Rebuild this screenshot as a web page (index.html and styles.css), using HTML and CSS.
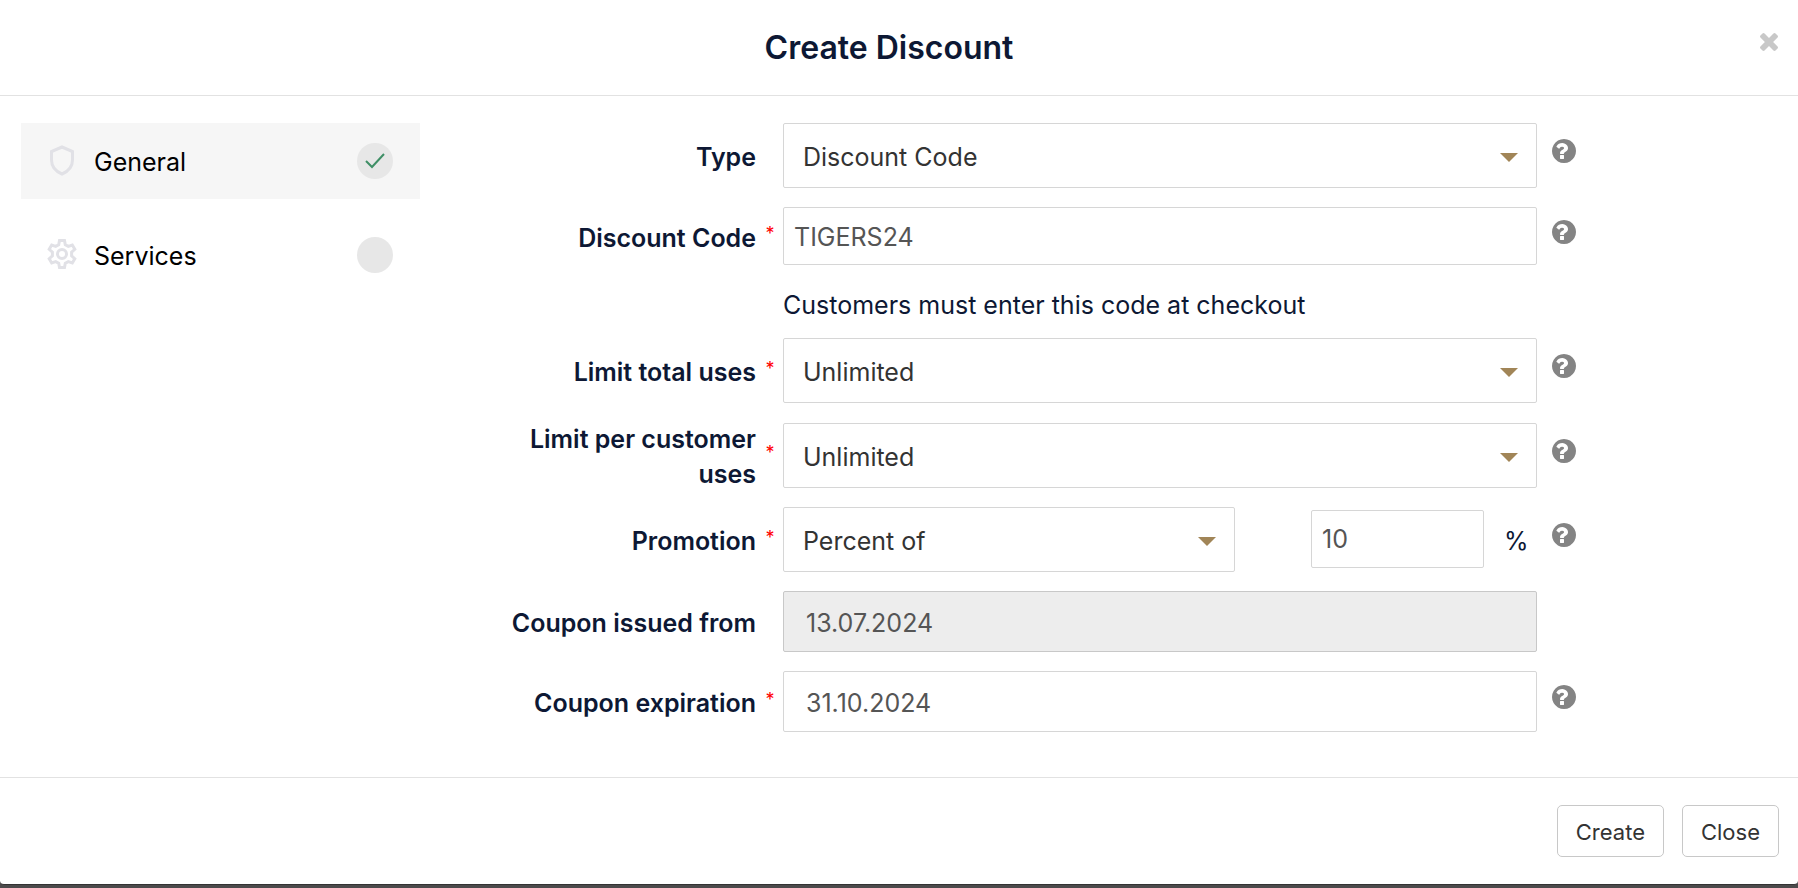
FILE: index.html
```html
<!DOCTYPE html>
<html lang="en">
<head>
<meta charset="utf-8">
<title>Create Discount</title>
<link rel="stylesheet" href="styles.css">
</head>
<body>
<svg class="sprite" aria-hidden="true">
  <symbol id="help" viewBox="128 128 1536 1536"><path d="M896 1376v-192q0-14-9-23t-23-9h-192q-14 0-23 9t-9 23v192q0 14 9 23t23 9h192q14 0 23-9t9-23zm256-672q0-88-55.500-163t-138.500-116-170-41q-243 0-371 213-15 24 8 42l132 100q7 6 19 6 16 0 25-12 53-68 86-92 34-24 86-24 48 0 85.500 26t37.500 59q0 38-20 61t-68 45q-63 28-115.500 86.500t-52.500 125.500v36q0 14 9 23t23 9h192q14 0 23-9t9-23q0-19 21.500-49.500t54.500-49.500q32-18 49-28.500t46-35 44.500-48 28-60.500 12.500-81zm512 192q0 209-103 385.500t-279.500 279.500-385.500 103-385.500-103-279.500-279.500-103-385.500 103-385.500 279.500-279.500 385.500-103 385.500 103 279.500 279.500 103 385.500z"/></symbol>
  <symbol id="caret" viewBox="0 0 18 9"><path d="M0 0h18l-9 9z"/></symbol>
</svg>
<div class="modal" role="dialog" aria-labelledby="title">
  <header class="modal-header">
    <h1 class="title" id="title">Create Discount</h1>
    <button class="dismiss" type="button" aria-label="Dismiss">
      <svg class="dismiss-icon" viewBox="302 366 1188 1188"><path d="M1490 1322q0 40-28 68l-136 136q-28 28-68 28t-68-28l-294-294-294 294q-28 28-68 28t-68-28l-136-136q-28-28-28-68t28-68l294-294-294-294q-28-28-28-68t28-68l136-136q28-28 68-28t68 28l294 294 294-294q28-28 68-28t68 28l136 136q28 28 28 68t-28 68l-294 294 294 294q28 28 28 68z"/></svg>
    </button>
  </header>
  <div class="modal-body">
    <nav class="steps">
      <a class="step active" href="#general">
        <svg class="step-icon" viewBox="0 0 30 30"><path d="M15 2L25.500 6.500V15c0 6.500-4.500 11.500-10.500 14C9 26.500 4.500 21.500 4.500 15V6.500z"/></svg>
        <span class="step-name">General</span>
        <span class="badge"><svg class="check" viewBox="0 0 20 16"><path d="M1 8l6 6L19 1"/></svg></span>
      </a>
      <a class="step" href="#services">
        <svg class="step-icon" viewBox="0 0 30 30"><circle cx="15" cy="15" r="4.500"/><path d="M12.500 1.500h5l.8 4.200 3 1.700 4-1.400 2.500 4.300-3.200 2.900v3.600l3.200 2.900-2.500 4.300-4-1.400-3 1.700-.8 4.200h-5l-.8-4.200-3-1.700-4 1.400-2.500-4.300 3.200-2.900v-3.600l-3.200-2.900 2.500-4.300 4 1.400 3-1.700z"/></svg>
        <span class="step-name">Services</span>
        <span class="badge"></span>
      </a>
    </nav>
    <form class="form" id="discount">
      <div class="row">
        <label class="label" for="type">Type</label>
        <span class="req"></span>
        <div class="select"><select class="control tall" id="type"><option>Discount Code</option></select><svg class="caret"><use href="#caret"/></svg></div>
        <svg class="help"><use href="#help"/></svg>
      </div>
      <div class="row">
        <label class="label" for="code">Discount Code</label>
        <span class="req">*</span>
        <input class="control" id="code" type="text" value="TIGERS24">
        <svg class="help"><use href="#help"/></svg>
        <p class="hint">Customers must enter this code at checkout</p>
      </div>
      <div class="row">
        <label class="label" for="total">Limit total uses</label>
        <span class="req">*</span>
        <div class="select"><select class="control tall" id="total"><option>Unlimited</option></select><svg class="caret"><use href="#caret"/></svg></div>
        <svg class="help"><use href="#help"/></svg>
      </div>
      <div class="row">
        <label class="label" for="each">Limit per customer uses</label>
        <span class="req">*</span>
        <div class="select"><select class="control tall" id="each"><option>Unlimited</option></select><svg class="caret"><use href="#caret"/></svg></div>
        <svg class="help"><use href="#help"/></svg>
      </div>
      <div class="row">
        <label class="label" for="promo">Promotion</label>
        <span class="req">*</span>
        <div class="promo">
          <div class="select"><select class="control tall" id="promo"><option>Percent of</option></select><svg class="caret"><use href="#caret"/></svg></div>
          <input class="control amount" id="amount" type="text" value="10" aria-label="Amount">
          <label class="unit" for="amount">%</label>
        </div>
        <svg class="help"><use href="#help"/></svg>
      </div>
      <div class="row">
        <label class="label" for="from">Coupon issued from</label>
        <span class="req"></span>
        <input class="control date" id="from" type="text" value="13.07.2024" disabled>
      </div>
      <div class="row">
        <label class="label" for="until">Coupon expiration</label>
        <span class="req">*</span>
        <input class="control date" id="until" type="text" value="31.10.2024">
        <svg class="help"><use href="#help"/></svg>
      </div>
    </form>
  </div>
  <footer class="modal-footer">
    <button class="btn" type="submit" form="discount">Create</button>
    <button class="btn" type="button">Close</button>
  </footer>
</div>
</body>
</html>
```
FILE: styles.css
```css
* {
  box-sizing: border-box;
}

body {
  margin: 0;
  min-height: 100vh;
  background: #4c4a4b;
  font-family: Inter, "Liberation Sans", sans-serif;
  font-size: 25px;
  line-height: 35px;
  color: #0d1834;
}

.sprite {
  display: none;
}

.modal {
  background: #fff;
  border-bottom: 1px solid #333;
  border-radius: 0 0 4px 4px;
}

.modal-header {
  position: relative;
  padding: 28px 20px 27px;
  border-bottom: 1px solid #e2e2e2;
}

.title {
  margin: 0;
  padding-right: 20px;
  font-size: 32px;
  line-height: 40px;
  font-weight: 600;
  text-align: center;
}

.dismiss {
  position: absolute;
  top: 33px;
  right: 20px;
  padding: 0;
  border: 0;
  background: none;
}

.dismiss-icon {
  display: block;
  width: 18px;
  height: 18px;
  fill: #c8c8c8;
}

.modal-body {
  display: grid;
  grid-template-columns: 399fr 1357fr;
  padding: 27px 21px 45px;
}

.steps {
  display: flex;
  flex-direction: column;
  gap: 18px;
}

.step {
  display: flex;
  align-items: center;
  gap: 17px;
  height: 76px;
  padding: 0 27px 0 26px;
  color: #000;
  text-decoration: none;
}

.active {
  background: #f6f6f6;
}

.step-icon {
  width: 30px;
  height: 32px;
  margin-bottom: 2px;
  fill: none;
  stroke: #e1e1e6;
  stroke-width: 3;
}

.step-name {
  flex: 1;
  padding-top: 3px;
}

.badge {
  display: grid;
  place-items: center;
  width: 36px;
  height: 36px;
  border-radius: 50%;
  background: #e7e7e7;
}

.check {
  width: 20px;
  height: 16px;
  fill: none;
  stroke: #3f8f66;
  stroke-width: 2;
}

.form {
  display: flex;
  flex-direction: column;
  gap: 19px;
}

.row {
  display: grid;
  grid-template-columns: 337fr 26px 754fr 39px 201fr;
  align-items: center;
}

.label {
  margin: -4px 0;
  padding: 4px 1px 0 72px;
  font-weight: 600;
  text-align: right;
}

.req {
  padding-bottom: 4px;
  font-size: 18px;
  line-height: 20px;
  text-align: center;
  color: #f00;
}

.control {
  width: 100%;
  height: 58px;
  padding: 2px 10px 0;
  border: 1px solid #d6d6d6;
  border-radius: 2px;
  background: #fff;
  font: inherit;
  color: #555;
}

.tall {
  display: block;
  height: 65px;
  padding: 4px 19px 0;
  appearance: none;
  color: #333;
}

.date {
  height: 61px;
  padding: 3px 22px 0;
}

.control:disabled {
  border-color: #c8c8c8;
  background: #ededed;
}

.select {
  position: relative;
}

.caret {
  position: absolute;
  top: 30px;
  right: 19px;
  width: 18px;
  height: 9px;
  fill: #a18557;
  pointer-events: none;
}

.promo {
  display: grid;
  grid-template-columns: 452fr 76fr 173fr 53fr;
  align-items: center;
}

.amount {
  grid-column: 3;
  margin-bottom: 2px;
  padding-top: 0;
}

.unit {
  padding: 3px 0 0 20px;
}

.help {
  width: 24px;
  height: 24px;
  margin: 0 0 9px 15px;
  fill: #848484;
}

.hint {
  grid-column: 3;
  margin: 23px 0 -4px;
}

.modal-footer {
  display: flex;
  justify-content: flex-end;
  gap: 18px;
  padding: 27px 19px;
  border-top: 1px solid #e2e2e2;
}

.btn {
  height: 52px;
  padding: 2px 18px 0;
  border: 1px solid #c8c8c8;
  border-radius: 5px;
  background: #fff;
  font: inherit;
  font-size: 22px;
  color: #333;
}
```
